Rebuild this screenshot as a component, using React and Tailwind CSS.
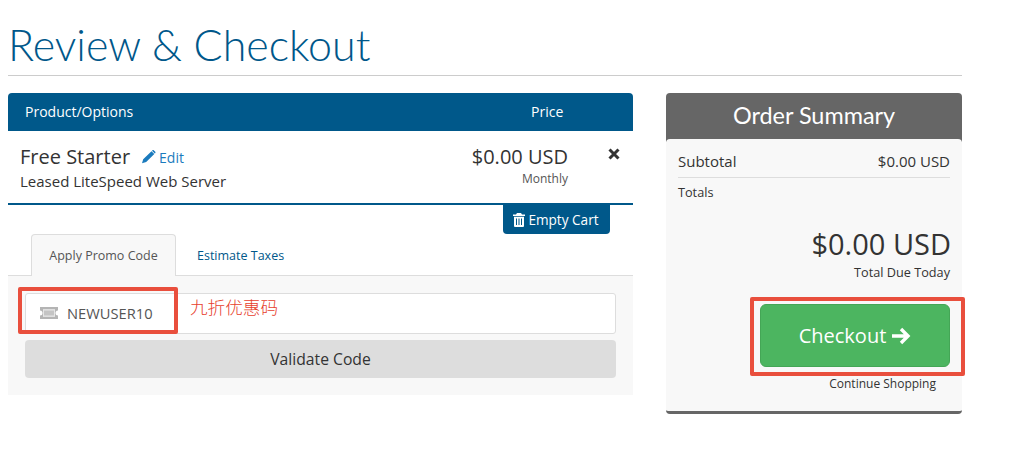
import React from "react";

function Ticket() {
  return (
    <svg width="18" height="12" viewBox="0 0 18 12" className="shrink-0">
      <path fill="#b4b4b4" fillRule="evenodd" d="M0 0h18v3.500a2.500 2.500 0 0 0 0 5V12H0V8.500a2.500 2.500 0 0 0 0-5zM3 2.500v7h12v-7z" />
      <rect x="3" y="2.500" width="12" height="7" fill="#e6e6e6" />
      <rect x="4" y="3.500" width="10" height="5" fill="#c4c4c4" />
    </svg>
  );
}

function Trash() {
  return (
    <svg width="12" height="14" viewBox="0 0 12 14" className="shrink-0">
      <path fill="#fff" fillRule="evenodd" d="M4 0h4l1 1.500h3V3H0V1.500h3zM1 3.800h10V13a1 1 0 0 1-1 1H2a1 1 0 0 1-1-1zM3 5.500v6.500h1V5.500zM5.500 5.500v6.500h1V5.500zM8 5.500v6.500h1V5.500z" />
    </svg>
  );
}

function Pencil() {
  return (
    <svg width="15" height="14" viewBox="0 0 15 14" className="shrink-0">
      <path fill="#1b7bbd" d="M10.500 1.200 13.300 4 5.200 12.100 1 13.300 2.200 9.200zM11.300.4c.5-.5 1.100-.5 1.600 0l1.200 1.200c.5.5.5 1.100 0 1.600l-.3.300-2.800-2.800z" />
    </svg>
  );
}

function Arrow() {
  return (
    <svg width="20" height="18" viewBox="0 0 20 18" className="shrink-0">
      <path fill="none" stroke="#fff" strokeWidth="3.400" d="M1 9h15M10 2l7 7-7 7" />
    </svg>
  );
}

export default function App() {
  return (
    <div className="w-[1010px] h-[458px] bg-white overflow-hidden pl-2 text-[#333] font-['Open_Sans',sans-serif]">
      <div className="w-[954px]">
        <h1 className="pt-[20px] h-[76px] border-b border-[#ccc] text-[43px] leading-[50px] font-light text-[#00578a] font-['Lato',sans-serif]">
          Review &amp; Checkout
        </h1>
        <div className="flex justify-between mt-[17px]">
          <div className="w-[625px]">
            <div className="h-[38px] pb-[1px] flex items-center bg-[#00588a] rounded-t-[4px] text-white text-[14px] font-medium">
              <span className="pl-[17px] w-[523px]">Product/Options</span>
              <span>Price</span>
            </div>
            <div className="relative h-[74px] border-b-2 border-[#00588a] pl-3 pt-[13px]">
              <div className="flex items-center h-[26px]">
                <span className="text-[20px] text-[#333]">Free Starter</span>
                <span className="ml-[11px] flex items-center gap-[3px] text-[14px] text-[#1b7bbd]">
                  <Pencil />
                  Edit
                </span>
              </div>
              <div className="text-[15px] leading-[20px] mt-[1px] text-[#333]">Leased LiteSpeed Web Server</div>
              <div className="absolute right-[65px] top-[13px] text-right">
                <div className="text-[20px] leading-[26px]">$0.00 USD</div>
                <div className="text-[12px] leading-[16px] mt-[1px] text-[#555]">Monthly</div>
              </div>
              <svg width="12" height="12" viewBox="0 0 12 12" className="absolute left-[600px] top-[17px]">
                <path stroke="#333" strokeWidth="3" d="M1.500 1.500l9 9M10.500 1.500l-9 9" />
              </svg>
            </div>
            <div className="relative">
              <div className="absolute right-[23px] top-0 h-[29px] w-[107px] pt-[1px] pr-[1px] flex items-center justify-center gap-[3px] bg-[#00588a] rounded-b-[4px] text-white text-[13.600px]">
                <Trash />
                Empty Cart
              </div>
            </div>
            <div className="mt-[29px] h-[42px] flex border-b border-[#ddd] pl-[23px] text-[12.500px]">
              <div className="w-[145px] h-[42px] pt-[1px] flex items-center justify-center bg-[#f8f8f8] border border-b-0 border-[#ddd] rounded-t-[4px] text-[#555]">
                Apply Promo Code
              </div>
              <div className="px-[21px] h-[41px] pt-[3px] flex items-center text-[#00588a]">Estimate Taxes</div>
            </div>
            <div className="h-[119px] bg-[#f8f8f8] px-[17px] pt-[17px]">
              <div className="relative h-[41px] pb-[1px] flex items-center gap-[9px] pl-[14px] bg-white border border-[#ddd] rounded-[3px] text-[14.700px] text-[#555]">
                <Ticket />
                NEWUSER10
                <div className="absolute -left-[8px] -top-[7px] w-[160px] h-[47px] border-4 border-[#e94f3d] rounded-[2px]" />
                <span className="absolute left-[164px] top-[2px] text-[17.600px] leading-[22px] font-light text-[#e73f2e] font-['Noto_Sans_CJK_SC',sans-serif]">
                  九折优惠码
                </span>
              </div>
              <div className="mt-[6px] h-[38px] pt-[1px] flex items-center justify-center bg-[#ddd] rounded-[4px] text-[15.700px] text-[#333]">
                Validate Code
              </div>
            </div>
          </div>
          <div className="w-[296px]">
            <div className="h-[49px] pb-[3px] flex items-center justify-center bg-[#666] rounded-t-[4px] text-white text-[23.400px] font-['Lato',sans-serif]">
              Order Summary
            </div>
            <div className="relative -mt-[3px] h-[275px] bg-[#f8f8f8] border-b-[3px] border-[#666] rounded-[4px] px-3 pt-[11px]">
              <div className="h-[28px] flex justify-between items-center border-b border-[#ddd] text-[15px] pb-[5px] pr-[1px]">
                <span>Subtotal</span>
                <span className="-mr-[1px]">$0.00 USD</span>
              </div>
              <div className="text-[12.700px] leading-[16px] mt-[6px]">Totals</div>
              <div className="text-right text-[29px] leading-[36px] mt-[26px] -mr-[1px]">$0.00 USD</div>
              <div className="text-right text-[12.700px] leading-[16px] mt-[2px]">Total Due Today</div>
              <div className="relative ml-[82px] mt-[24px] h-[63px] flex items-center justify-center gap-[5px] bg-[#4cb560] border border-[#44a656] rounded-[6px] text-white text-[20px]">
                Checkout
                <Arrow />
                <div className="absolute -left-[11px] -top-[8px] w-[215px] h-[79px] border-4 border-[#e94f3d] rounded-[2px]" />
              </div>
              <div className="text-right pr-[14px] text-[12px] leading-[16px] mt-[9px]">Continue Shopping</div>
            </div>
          </div>
        </div>
      </div>
    </div>
  );
}
